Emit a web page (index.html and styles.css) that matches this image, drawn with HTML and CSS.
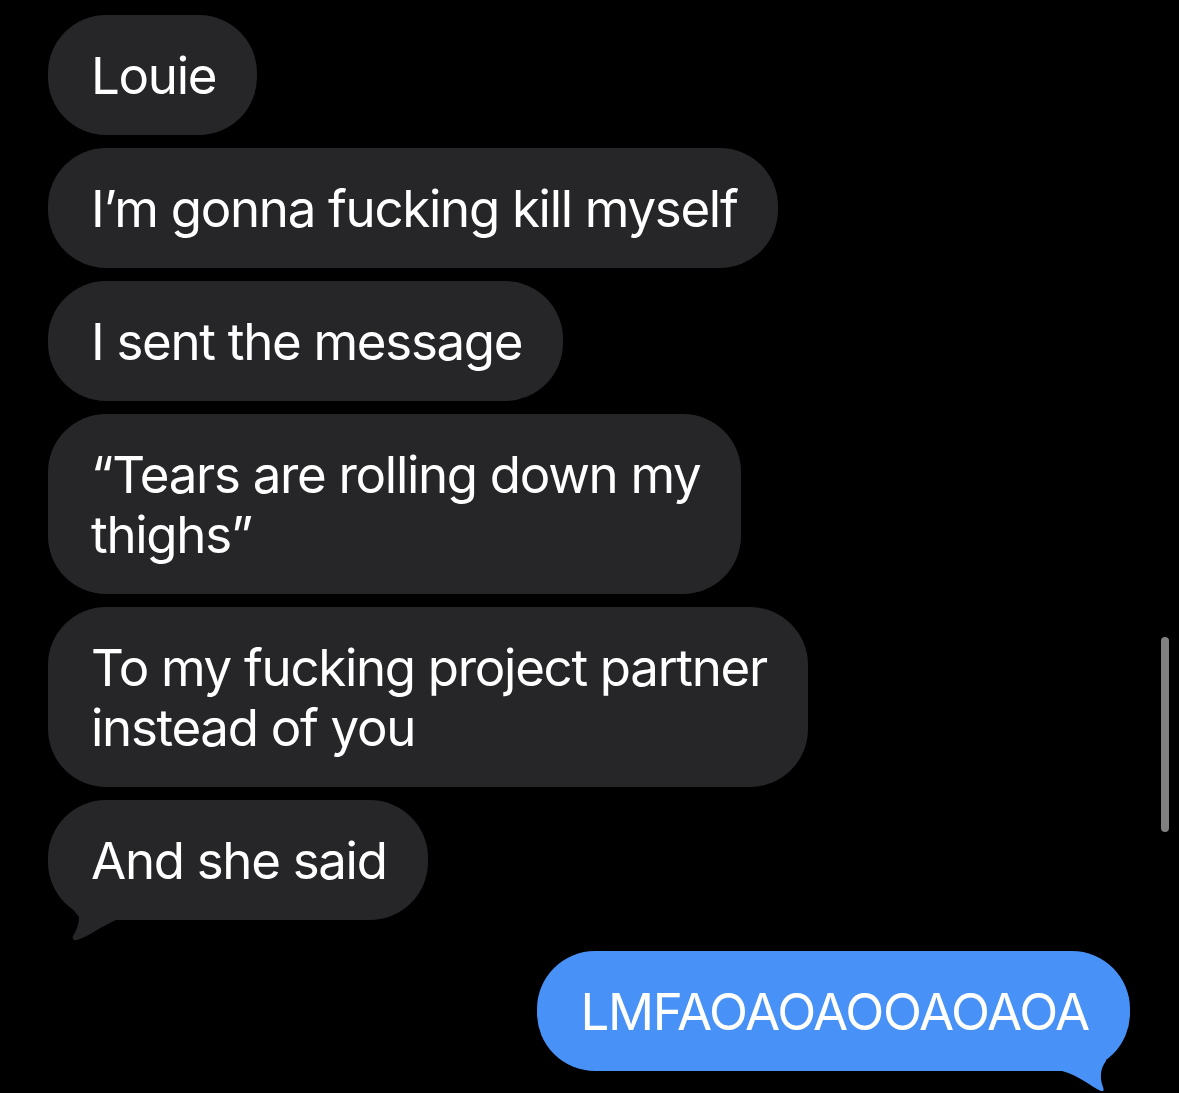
FILE: index.html
```html
<!DOCTYPE html>
<html lang="en">
<head>
  <meta charset="UTF-8">
  <title>Messages</title>
<link rel="stylesheet" href="styles.css">
</head>
<body>
  <section class="thread">
    <p class="bubble in">Louie</p>
    <p class="bubble in">I’m gonna fucking kill myself</p>
    <p class="bubble in">I sent the message</p>
    <p class="bubble in">“Tears are rolling down my<br>thighs”</p>
    <p class="bubble in">To my fucking project partner<br>instead of you</p>
    <p class="bubble in last">And she said
      <svg class="tail" viewBox="0 98 70 42" width="70" height="42"><path d="M16 98 L31 117 C31 125 28 131 25 136 C24 139 26 141 29 140 C40 137 52 127 68 120 L68 98 Z"/></svg>
    </p>
    <p class="bubble out last">LMFAOAOAOOAOAOA
      <svg class="tail" viewBox="520 98 70 42" width="70" height="42"><path d="M566 98 L566 110 C561 116 559 126 563 136 C564 139 564 141 561 140 C550 135 540 125 522 120 L522 98 Z"/></svg>
    </p>
  </section>
  <div class="scrollbar"></div>
</body>
</html>
```

FILE: styles.css
```css
*{margin:0;padding:0;box-sizing:border-box}
html,body{background:#000;}
body{width:1179px;height:1093px;overflow:hidden;position:relative;font-family:Inter,"Noto Sans",sans-serif;}
.thread{display:flex;flex-direction:column;align-items:flex-start;gap:13px;padding:15px 49px 0 48px;}
.bubble{position:relative;padding:31px 41px 29px 43px;font-size:51px;line-height:60px;color:#fff;border-radius:58px;letter-spacing:-1.3px;}
.in{background:#262629;}
.in .tail{fill:#262629;}
.out{background:#4891f6;align-self:flex-end;margin-top:18px;}
.out .tail{fill:#4891f6;}
.tail{position:absolute;bottom:-20px;}
.in .tail{left:0;}
.out .tail{right:0;}
.scrollbar{position:absolute;left:1161px;top:637px;width:8px;height:195px;border-radius:4px;background:#808080;}
```
